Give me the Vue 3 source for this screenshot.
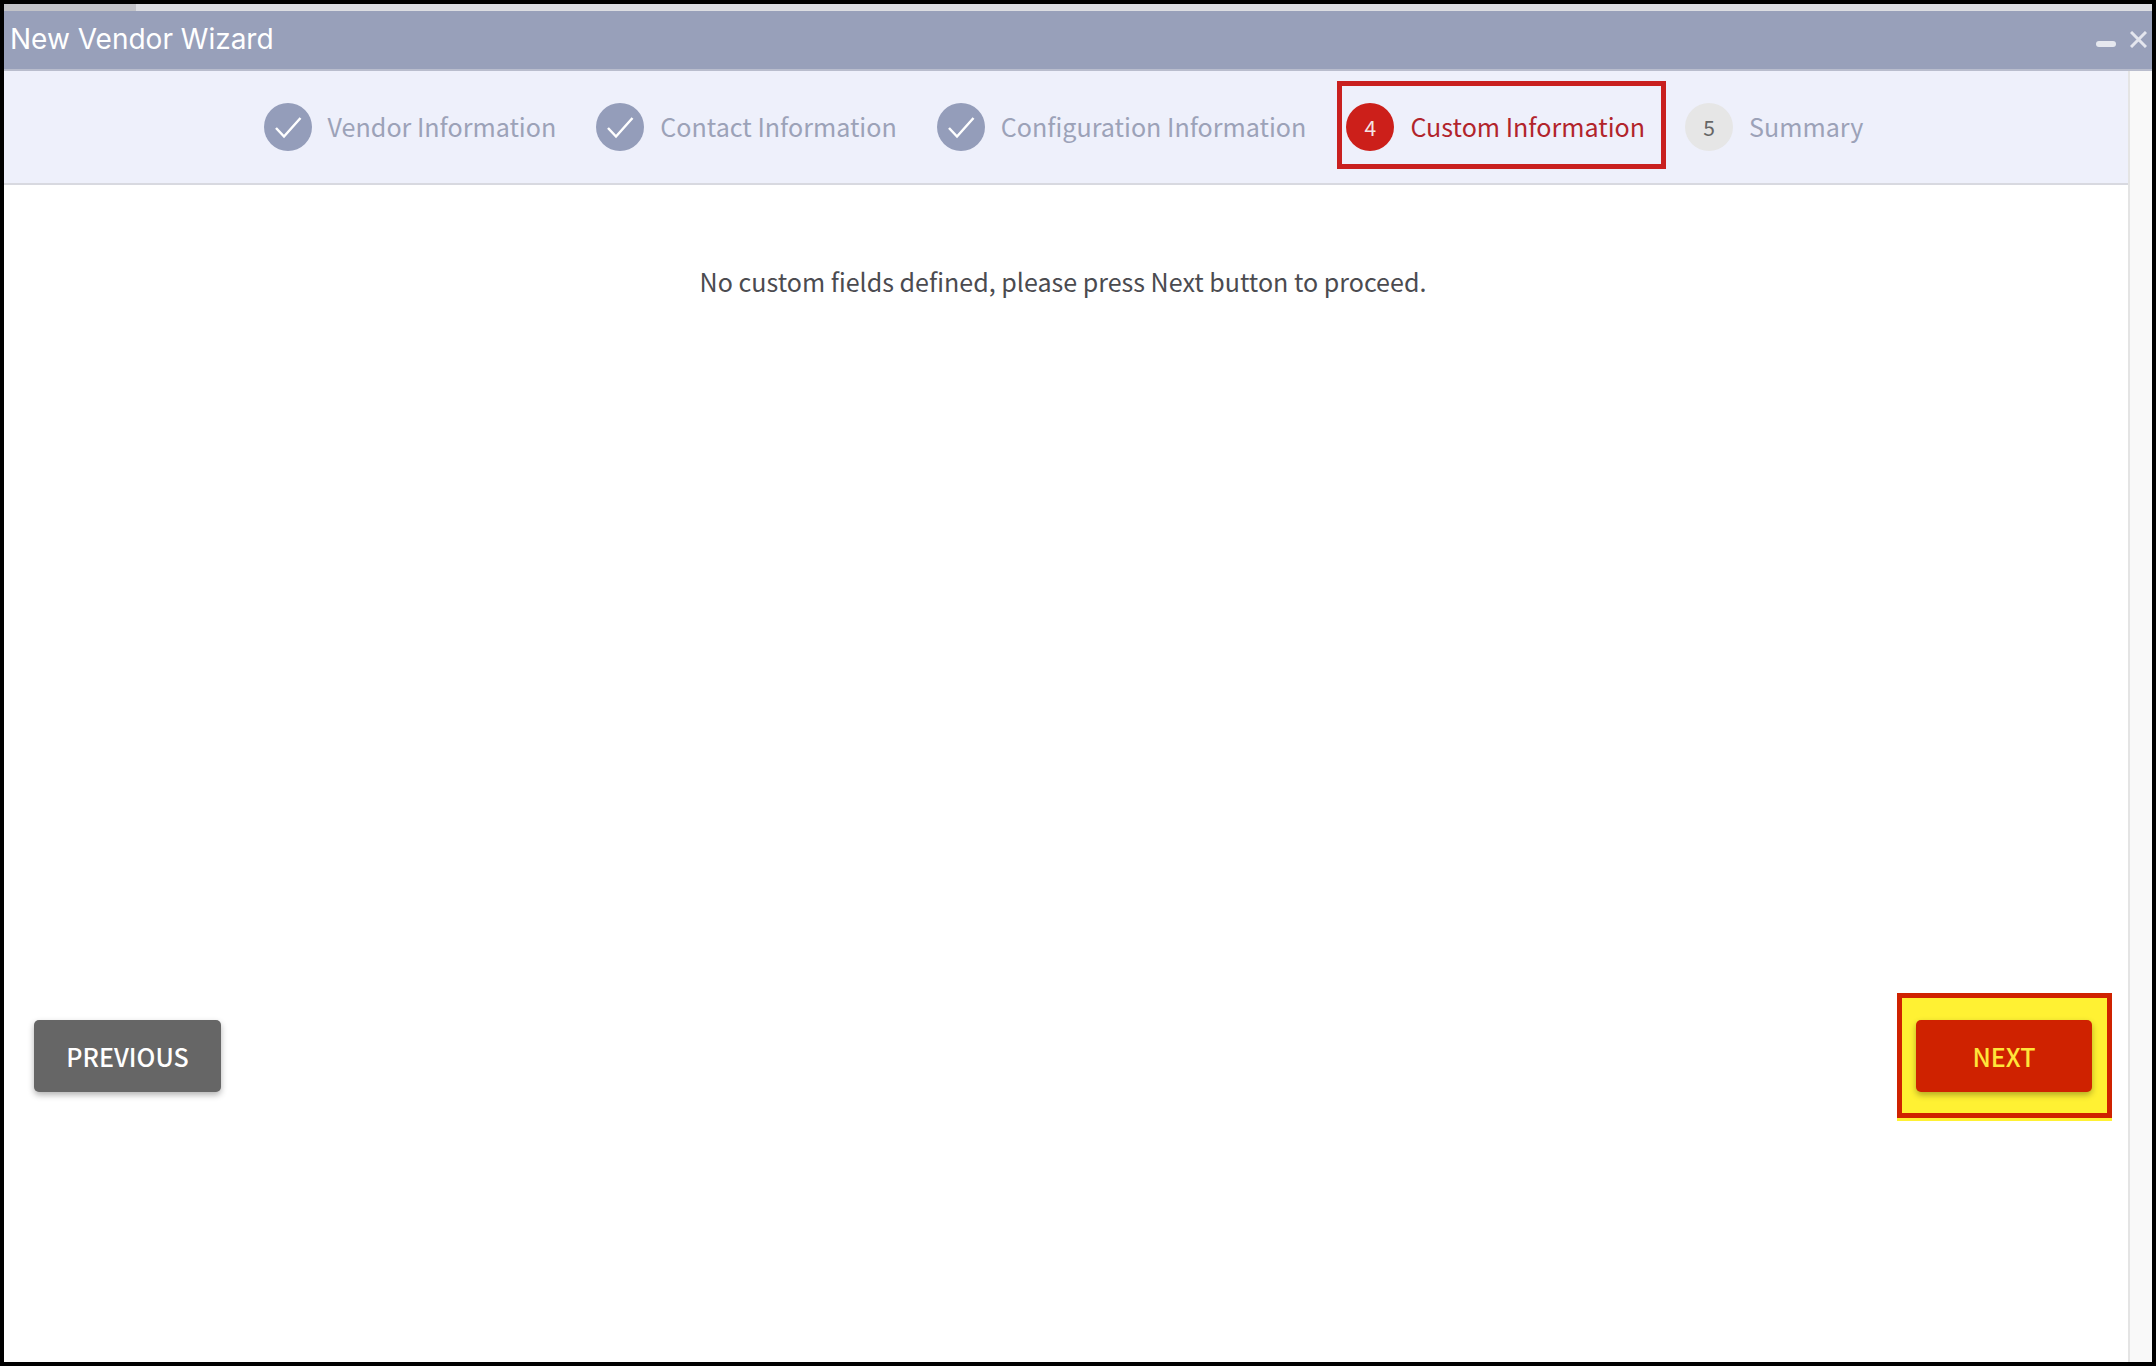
<script setup>
const steps = [
  { label: 'Vendor Information', state: 'done' },
  { label: 'Contact Information', state: 'done' },
  { label: 'Configuration Information', state: 'done' },
  { label: 'Custom Information', state: 'active', number: 4 },
  { label: 'Summary', state: 'todo', number: 5 },
]
</script>

<template>
  <div class="frame">
    <div class="strip"><div class="strip-tab"></div></div>
    <header class="titlebar">
      <h1 class="title">New Vendor Wizard</h1>
      <div class="win-controls">
        <span class="min"></span>
        <svg class="close" viewBox="0 0 17 17" width="17" height="17" aria-label="Close">
          <path d="M1 1L16 16M16 1L1 16" />
        </svg>
      </div>
    </header>
    <div class="body">
      <main class="main">
        <nav class="stepper">
          <div v-for="s in steps" :key="s.label" class="step" :class="s.state">
            <span class="dot">
              <svg v-if="s.state === 'done'" viewBox="0 0 48 48" width="48" height="48">
                <path d="M12 25L20 33.5L36.5 15" />
              </svg>
              <template v-else>{{ s.number }}</template>
            </span>
            <span class="label">{{ s.label }}</span>
          </div>
        </nav>
        <p class="message">No custom fields defined, please press Next button to proceed.</p>
        <footer class="actions">
          <button class="btn prev" type="button">PREVIOUS</button>
          <div class="highlight">
            <button class="btn next" type="button">NEXT</button>
          </div>
        </footer>
      </main>
      <aside class="scrollbar"></aside>
    </div>
  </div>
</template>

<style>
html, body { margin: 0; background: #000; }
</style>

<style scoped>
.frame {
  box-sizing: border-box;
  width: 2148px;
  height: 1358px;
  margin: 4px 0 0 4px;
  display: flex;
  flex-direction: column;
  background: #fff;
  font-family: "Noto Sans CJK SC", "Noto Sans", sans-serif;
}
.strip { height: 7px; background: #dcdde2; flex: none; }
.strip-tab { width: 132px; height: 100%; background: #c2c3c8; }
.titlebar {
  flex: none;
  box-sizing: border-box;
  height: 60px;
  background: #98a0ba;
  border-bottom: 2px solid #b9bdcd;
  display: flex;
  align-items: center;
  justify-content: space-between;
  padding: 0 5px 2px 6px;
}
.title {
  margin: 0;
  font-family: Inter, Roboto, sans-serif;
  font-weight: 400;
  font-size: 28px;
  color: #fff;
}
.win-controls { display: flex; align-items: center; gap: 14px; }
.min {
  width: 20px;
  height: 6px;
  margin-top: 10px;
  border-radius: 3px;
  background: #e6e8ef;
}
.close path { stroke: #e4e6ee; stroke-width: 3; fill: none; }
.body { flex: 1; display: flex; min-height: 0; }
.main { flex: 1; display: flex; flex-direction: column; min-width: 0; }
.stepper {
  box-sizing: border-box;
  height: 114px;
  background: #eef0fb;
  border-bottom: 2px solid #d8d9e0;
  display: flex;
  align-items: center;
  justify-content: center;
  gap: 40px;
  padding-right: 5px;
}
.step { position: relative; display: flex; align-items: center; gap: 16px; }
.dot {
  width: 48px;
  height: 48px;
  border-radius: 50%;
  display: flex;
  align-items: center;
  justify-content: center;
  font-size: 21px;
}
.dot path { stroke: #fff; stroke-width: 2.5; fill: none; }
.label { font-size: 25.1px; line-height: 40px; padding-bottom: 2px; color: #9ca2b8; }
.done .dot { background: #949dba; }
.active .dot { background: #cc1f1a; color: #f4e3e3; }
.active .label { color: #b2242b; }
.active::after {
  content: "";
  position: absolute;
  left: -9px;
  right: -21px;
  top: -22px;
  bottom: -18px;
  border: 5px solid #c9201f;
}
.todo .dot { background: #e6e6e6; color: #666; }
.message {
  margin: 76px 0 0;
  padding-right: 6px;
  text-align: center;
  font-size: 25.05px;
  line-height: 40px;
  color: #4b4b50;
}
.actions {
  margin-top: 692px;
  display: flex;
  align-items: center;
  justify-content: space-between;
  padding: 0 16px 0 30px;
}
.highlight {
  border: 5px solid #cf2200;
  padding: 22px 15px 21px 14px;
  background: #fff133;
  box-shadow: 0 3px 0 #fff133;
  display: flex;
}
.btn {
  height: 72px;
  border: 0;
  border-radius: 5px;
  font-family: inherit;
  font-size: 25px;
  font-weight: 500;
  box-shadow: 0 3px 6px rgba(0, 0, 0, 0.3);
}
.prev { width: 187px; background: #666; color: #fff; }
.next { width: 176px; background: #cf2200; color: #ffe53a; }
.scrollbar {
  flex: none;
  box-sizing: border-box;
  width: 24px;
  background: #f9f9f9;
  border-left: 2px solid #e4e4e4;
}
</style>
